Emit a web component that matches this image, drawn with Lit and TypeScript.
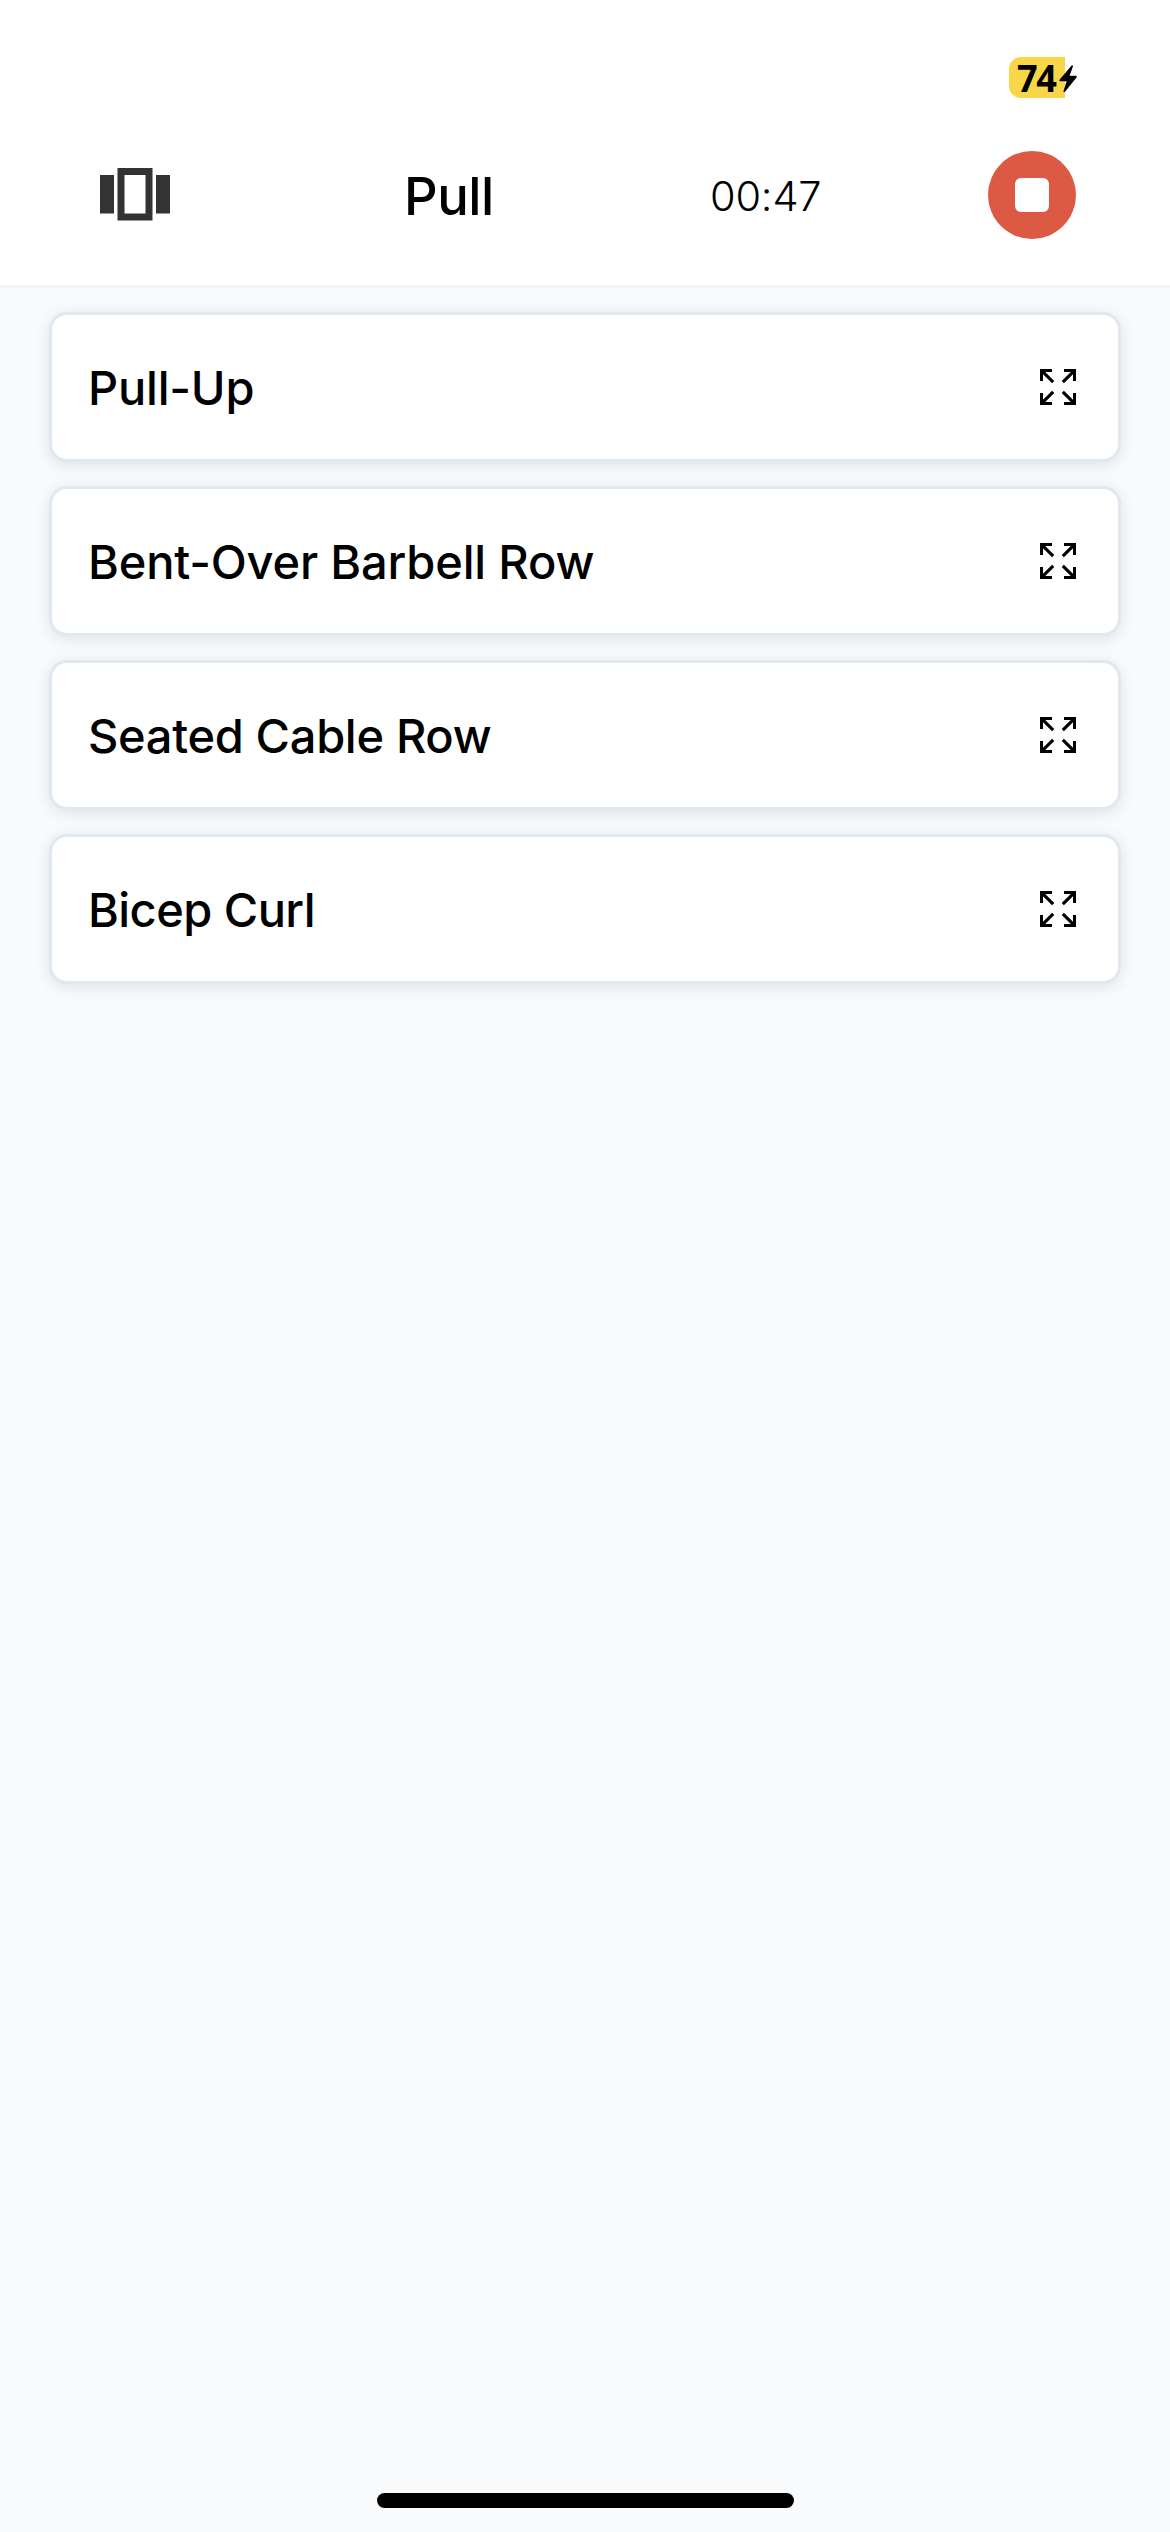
import { LitElement, html, css, svg } from "lit";
import { customElement, property } from "lit/decorators.js";
import { styleMap } from "lit/directives/style-map.js";

const EXERCISES = [
  { name: "Pull-Up", tracking: -0.2 },
  { name: "Bent-Over Barbell Row", tracking: -0.17 },
  { name: "Seated Cable Row", tracking: -0.32 },
  { name: "Bicep Curl", tracking: -0.55 },
];

const arrow = svg`<path d="M0 0H12V3H5.2L14.3 12.1L12.1 14.3L3 5.2V12H0Z" />`;

@customElement("exercise-card")
export class ExerciseCard extends LitElement {
  @property() name = "";
  @property({ type: Number }) tracking = 0;

  static styles = css`
    :host {
      display: flex;
      align-items: center;
      justify-content: space-between;
      box-sizing: border-box;
      height: 150px;
      padding: 0 42px 0 36px;
      background: #fff;
      border: 3px solid #e2e8f0;
      border-radius: 18px;
      box-shadow: 0 3px 15px rgba(0, 0, 0, 0.1);
    }
    .name {
      font-size: 47px;
      font-weight: 500;
      line-height: 60px;
      padding-top: 2px;
      white-space: nowrap;
    }
    .expand {
      display: block;
      width: 36px;
      height: 36px;
    }
  `;

  render() {
    return html`
      <span class="name" style=${styleMap({ letterSpacing: `${this.tracking}px` })}>${this.name}</span>
      <svg class="expand" viewBox="0 0 36 36">
        <g>${arrow}</g>
        <g transform="translate(36 0) scale(-1 1)">${arrow}</g>
        <g transform="translate(0 36) scale(1 -1)">${arrow}</g>
        <g transform="translate(36 36) scale(-1 -1)">${arrow}</g>
      </svg>
    `;
  }
}

@customElement("app-root")
export class AppRoot extends LitElement {
  static styles = css`
    :host {
      display: flex;
      flex-direction: column;
      box-sizing: border-box;
      width: 1170px;
      height: 2532px;
      overflow: hidden;
      background: #f9fafc;
      color: #000;
      font-family: Inter, "Liberation Sans", sans-serif;
    }
    .header {
      box-sizing: border-box;
      height: 288px;
      background: #fff;
      border-bottom: 3px solid #f1f5f9;
    }
    .status {
      display: flex;
      justify-content: flex-end;
      box-sizing: border-box;
      height: 151px;
      padding: 57px 92px 0 0;
    }
    .battery {
      position: relative;
      display: flex;
      align-items: center;
      box-sizing: border-box;
      width: 69px;
      height: 41px;
      padding-left: 8px;
      background: linear-gradient(#f8d64a, #f8d64a) 0 0 / 56px 41px no-repeat;
      border-radius: 12px 0 0 12px;
      font-family: "Noto Sans", sans-serif;
      font-size: 38px;
      font-weight: 700;
      line-height: 41px;
      letter-spacing: -1.5px;
    }
    .level {
      transform: scaleX(0.95);
      transform-origin: 0 50%;
    }
    .bolt {
      position: absolute;
      left: 50px;
      top: 8px;
      width: 18px;
      height: 28px;
    }
    .bar {
      display: grid;
      grid-template-columns: 315px 303px 278px 90px;
      align-items: center;
      height: 88px;
      padding-left: 93px;
    }
    .carousel {
      display: block;
      width: 84px;
      height: 84px;
      margin-top: 2px;
      fill: #333;
    }
    .title {
      padding-top: 2px;
      margin-left: -4px;
      font-size: 52.5px;
      font-weight: 500;
      line-height: 64px;
      letter-spacing: -0.5px;
    }
    .time {
      padding-top: 1px;
      margin-left: -1px;
      font-size: 41.5px;
      font-weight: 300;
      line-height: 52px;
      letter-spacing: -0.2px;
    }
    .stop {
      display: flex;
      align-items: center;
      justify-content: center;
      width: 88px;
      height: 88px;
      margin-left: -1px;
      border-radius: 50%;
      background: #dc5a44;
    }
    .square {
      width: 34px;
      height: 34px;
      border-radius: 6px;
      background: #fff;
    }
    .list {
      display: flex;
      flex: 1;
      flex-direction: column;
      gap: 24px;
      padding: 24px 49px 0;
    }
    .home {
      width: 417px;
      height: 15px;
      margin: 0 auto 24px 377px;
      border-radius: 8px;
      background: #000;
    }
  `;

  render() {
    return html`
      <div class="header">
        <div class="status">
          <div class="battery">
            <span class="level">74</span>
            <svg class="bolt" viewBox="0 0 18 28">
              <path
                d="M12.6 0.4Q14.2 -0.4 13.9 1.4L10.6 10.8H16.8Q18.4 11 17.5 12.4L6 26.8Q4.2 27.8 4.6 25.8L7.6 16.2H1.2Q-0.2 15.8 0.7 14.5Z"
              />
            </svg>
          </div>
        </div>
        <div class="bar">
          <svg class="carousel" viewBox="0 0 24 24">
            <path d="M2 6H6V17H2ZM18 6H22V17H18ZM7 4H17V19H7ZM9 6V17H15V6Z" />
          </svg>
          <div class="title">Pull</div>
          <div class="time">00:47</div>
          <div class="stop"><div class="square"></div></div>
        </div>
      </div>
      <div class="list">
        ${EXERCISES.map((e) => html`<exercise-card .name=${e.name} .tracking=${e.tracking}></exercise-card>`)}
      </div>
      <div class="home"></div>
    `;
  }
}
